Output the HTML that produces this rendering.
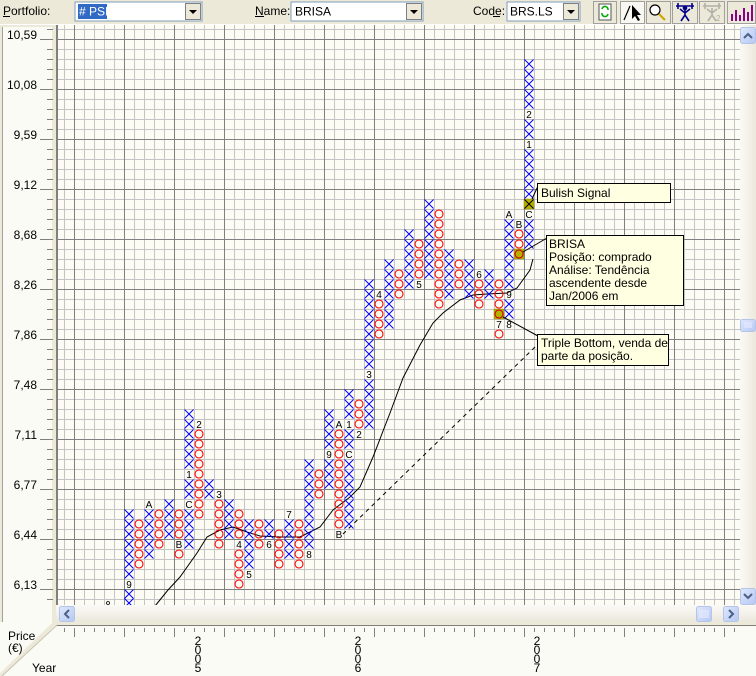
<!DOCTYPE html>
<html><head><meta charset="utf-8"><style>
html,body{margin:0;padding:0;background:#ece9d8;}
svg{display:block;font-family:"Liberation Sans",sans-serif;}
</style></head><body>
<svg width="756" height="676" viewBox="0 0 756 676" xmlns="http://www.w3.org/2000/svg">
<defs>
<path id="x" d="M-4.5,-4.5L4.5,4.5M4.5,-4.5L-4.5,4.5" stroke="#0000ff" stroke-width="1" fill="none"/>
<circle id="o" r="4" stroke="#ff0000" stroke-width="1.1" fill="none"/>
<pattern id="g" x="74" y="39" width="50" height="50" patternUnits="userSpaceOnUse">
<rect width="50" height="50" fill="#fcfcf5"/>
<rect x="10" width="1" height="50" fill="#c4c4c4"/><rect x="20" width="1" height="50" fill="#c4c4c4"/><rect x="30" width="1" height="50" fill="#c4c4c4"/><rect x="40" width="1" height="50" fill="#c4c4c4"/>
<rect y="10" width="50" height="1" fill="#c4c4c4"/><rect y="20" width="50" height="1" fill="#c4c4c4"/><rect y="30" width="50" height="1" fill="#c4c4c4"/><rect y="40" width="50" height="1" fill="#c4c4c4"/>
<rect x="0" width="1" height="50" fill="#808080"/><rect y="0" width="50" height="1" fill="#808080"/>
</pattern>
<pattern id="lt" x="0" y="9" width="10" height="10" patternUnits="userSpaceOnUse"><rect x="0" y="0" width="10" height="1" fill="#808080"/></pattern>
<pattern id="bt" x="4" y="0" width="10" height="10" patternUnits="userSpaceOnUse"><rect x="0" y="0" width="1" height="10" fill="#808080"/></pattern>
<linearGradient id="sb" x1="0" y1="0" x2="0" y2="1"><stop offset="0" stop-color="#fbfaf6"/><stop offset="1" stop-color="#ebe8dc"/></linearGradient>
<linearGradient id="sbv" x1="0" y1="0" x2="1" y2="0"><stop offset="0" stop-color="#fbfaf6"/><stop offset="1" stop-color="#ebe8dc"/></linearGradient>
<linearGradient id="bb" x1="0" y1="0" x2="1" y2="1"><stop offset="0" stop-color="#dfe8fd"/><stop offset="1" stop-color="#b5c8f3"/></linearGradient>
</defs>

<rect x="0" y="0" width="756" height="25" fill="#ece9d8"/>
<g font-size="12" fill="#000">
<text x="3" y="15">Portfolio:</text><rect x="3" y="16" width="7" height="1"/>
<rect x="75" y="2" width="127" height="19" fill="#fff" stroke="#7f9db9"/>
<rect x="78" y="4" width="29" height="15" fill="#316ac5"/>
<text x="79" y="15.5" fill="#fff"># PSI</text>
<text x="255" y="15">Name:</text><rect x="255" y="16" width="9" height="1"/>
<rect x="291" y="2" width="132" height="19" fill="#fff" stroke="#7f9db9"/>
<text x="295" y="15.5">BRISA</text>
<text x="473" y="15">Code:</text><rect x="493" y="16" width="7" height="1"/>
<rect x="507" y="2" width="73" height="19" fill="#fff" stroke="#7f9db9"/>
<text x="510" y="15.5">BRS.LS</text>
</g>
<g fill="#ece9d8" stroke="#808080">
<rect x="185.5" y="3.5" width="15" height="16"/><rect x="406.5" y="3.5" width="15" height="16"/><rect x="563.5" y="3.5" width="15" height="16"/>
</g>
<path d="M189,10h8l-4,4z M410,10h8l-4,4z M567,10h8l-4,4z" fill="#000"/>
<g fill="#ece9d8" stroke="#a0a0a0">
<rect x="593.5" y="1.5" width="23" height="22"/><rect x="620.5" y="1.5" width="24" height="22" fill="#f8f7f2"/><rect x="646.5" y="1.5" width="24" height="22"/><rect x="672.5" y="1.5" width="25" height="22"/><rect x="699.5" y="1.5" width="25" height="22"/><rect x="727.5" y="1.5" width="28" height="22"/>
</g>
<rect x="599" y="4" width="12" height="16" fill="#fff" stroke="#555"/>
<path d="M602,9a3,3 0 0 1 6,1M608,14a3,3 0 0 1 -6,-1" stroke="#0a0" stroke-width="1.6" fill="none"/>
<path d="M624,20L630,6" stroke="#000" stroke-width="1.2"/>
<path d="M632,5L632,19L635,16L638,21L640,20L637,15L641,15Z" fill="#000"/>
<circle cx="655" cy="10" r="5" fill="#fff" stroke="#000" stroke-width="1.2"/>
<path d="M659,14L665,20" stroke="#c9a800" stroke-width="2.2"/>
<g stroke="#00008b" stroke-width="1.6" fill="none"><path d="M676,6h18M678,3v6M692,3v6M685,8v7M680,9l5,4l5,-4M681,21l4,-6l4,6"/><circle cx="685" cy="8" r="1.5" fill="#00008b"/></g>
<g stroke="#b0b0a8" stroke-width="1.6" fill="none"><path d="M703,6h18M705,3v6M719,3v6M712,8v7M707,9l5,4l5,-4M708,21l4,-6l4,6"/></g>
<text x="716" y="21" font-size="8" fill="#b0b0a8">2</text>
<g fill="#8b008b"><rect x="731" y="14" width="2" height="7"/><rect x="735" y="10" width="2" height="11"/><rect x="739" y="15" width="2" height="6"/><rect x="743" y="8" width="2" height="13"/><rect x="747" y="12" width="2" height="9"/><rect x="751" y="5" width="2" height="16"/></g>
<rect x="0" y="24" width="756" height="1" fill="#fff"/>

<rect x="0" y="25" width="56" height="600" fill="#ece9d8"/>
<rect x="2" y="27" width="50" height="597" fill="#fbfbf6"/>
<rect x="2" y="27" width="1" height="597" fill="#a0a0a0"/>
<rect x="47" y="29" width="6" height="576" fill="url(#lt)"/>
<g font-size="12" fill="#000" text-anchor="end">
<text x="37" y="39">10,59</text><text x="37" y="89">10,08</text><text x="37" y="139">9,59</text><text x="37" y="189">9,12</text><text x="37" y="239">8,68</text><text x="37" y="289">8,26</text><text x="37" y="339">7,86</text><text x="37" y="389">7,48</text><text x="37" y="439">7,11</text><text x="37" y="489">6,77</text><text x="37" y="539">6,44</text><text x="37" y="589">6,13</text>
</g>
<g fill="#808080"><rect x="40" y="39" width="13" height="1"/><rect x="40" y="89" width="13" height="1"/><rect x="40" y="139" width="13" height="1"/><rect x="40" y="189" width="13" height="1"/><rect x="40" y="239" width="13" height="1"/><rect x="40" y="289" width="13" height="1"/><rect x="40" y="339" width="13" height="1"/><rect x="40" y="389" width="13" height="1"/><rect x="40" y="439" width="13" height="1"/><rect x="40" y="489" width="13" height="1"/><rect x="40" y="539" width="13" height="1"/><rect x="40" y="589" width="13" height="1"/></g>

<rect x="56" y="25" width="2" height="600" fill="#808080"/>
<rect x="58" y="25" width="682" height="580" fill="url(#g)"/>

<path d="M155,606 L168,590 L180,577 L197,553 L207,537 L220,530 L233,527 L247,532 L260,536 L280,537 L300,537 L320,527 L333,510 L350,497 L360,487 L373,457 L390,413 L403,378 L420,345 L433,323 L443,313 L460,300 L473,295 L487,294 L507,293 L517,288 L530,270 L533,259" stroke="#000" stroke-width="1" fill="none"/>
<path d="M343,534 L535,347" stroke="#000" stroke-width="1" stroke-dasharray="4,4" fill="none"/>
<circle cx="108" cy="603" r="1.5" fill="none" stroke="#000" stroke-width="0.8"/>

<g fill="#b8b000" stroke="#8a8400" stroke-width="0.5"><rect x="524" y="199" width="10" height="10"/><rect x="514" y="249" width="10" height="10"/><rect x="494" y="309" width="10" height="10"/></g>
<path d="M524.5,199.5L533.5,208.5M533.5,199.5L524.5,208.5" stroke="#000" stroke-width="1"/>
<circle cx="519" cy="254" r="4" stroke="#c00" stroke-width="1.1" fill="none"/>
<circle cx="499" cy="314" r="4" stroke="#c00" stroke-width="1.1" fill="none"/>

<g transform="translate(129 0)"><use href="#x" y="514"/><use href="#x" y="524"/><use href="#x" y="534"/><use href="#x" y="544"/><use href="#x" y="554"/><use href="#x" y="564"/><use href="#x" y="574"/><use href="#x" y="594"/><use href="#x" y="603"/></g>
<g transform="translate(139 0)"><use href="#o" y="524"/><use href="#o" y="534"/><use href="#o" y="544"/><use href="#o" y="554"/><use href="#o" y="564"/></g>
<g transform="translate(149 0)"><use href="#x" y="514"/><use href="#x" y="524"/><use href="#x" y="534"/><use href="#x" y="544"/><use href="#x" y="554"/></g>
<g transform="translate(159 0)"><use href="#o" y="514"/><use href="#o" y="524"/><use href="#o" y="534"/><use href="#o" y="544"/></g>
<g transform="translate(169 0)"><use href="#x" y="504"/><use href="#x" y="514"/><use href="#x" y="524"/><use href="#x" y="534"/></g>
<g transform="translate(179 0)"><use href="#o" y="514"/><use href="#o" y="524"/><use href="#o" y="534"/><use href="#o" y="554"/></g>
<g transform="translate(189 0)"><use href="#x" y="414"/><use href="#x" y="424"/><use href="#x" y="434"/><use href="#x" y="444"/><use href="#x" y="454"/><use href="#x" y="464"/><use href="#x" y="484"/><use href="#x" y="494"/><use href="#x" y="514"/><use href="#x" y="524"/><use href="#x" y="534"/><use href="#x" y="544"/></g>
<g transform="translate(199 0)"><use href="#o" y="434"/><use href="#o" y="444"/><use href="#o" y="454"/><use href="#o" y="464"/><use href="#o" y="474"/><use href="#o" y="484"/><use href="#o" y="494"/><use href="#o" y="504"/><use href="#o" y="514"/></g>
<g transform="translate(209 0)"><use href="#x" y="484"/><use href="#x" y="494"/></g>
<g transform="translate(219 0)"><use href="#o" y="504"/><use href="#o" y="514"/><use href="#o" y="524"/><use href="#o" y="534"/><use href="#o" y="544"/></g>
<g transform="translate(229 0)"><use href="#x" y="504"/><use href="#x" y="514"/><use href="#x" y="524"/><use href="#x" y="534"/></g>
<g transform="translate(239 0)"><use href="#o" y="514"/><use href="#o" y="524"/><use href="#o" y="534"/><use href="#o" y="554"/><use href="#o" y="564"/><use href="#o" y="574"/><use href="#o" y="584"/></g>
<g transform="translate(249 0)"><use href="#x" y="524"/><use href="#x" y="534"/><use href="#x" y="544"/><use href="#x" y="554"/><use href="#x" y="564"/></g>
<g transform="translate(259 0)"><use href="#o" y="524"/><use href="#o" y="534"/><use href="#o" y="544"/></g>
<g transform="translate(269 0)"><use href="#x" y="524"/><use href="#x" y="534"/></g>
<g transform="translate(279 0)"><use href="#o" y="534"/><use href="#o" y="544"/><use href="#o" y="554"/><use href="#o" y="564"/></g>
<g transform="translate(289 0)"><use href="#x" y="524"/><use href="#x" y="534"/><use href="#x" y="544"/><use href="#x" y="554"/></g>
<g transform="translate(299 0)"><use href="#o" y="524"/><use href="#o" y="534"/><use href="#o" y="544"/><use href="#o" y="554"/><use href="#o" y="564"/></g>
<g transform="translate(309 0)"><use href="#x" y="464"/><use href="#x" y="474"/><use href="#x" y="484"/><use href="#x" y="494"/><use href="#x" y="504"/><use href="#x" y="514"/><use href="#x" y="524"/><use href="#x" y="534"/><use href="#x" y="544"/></g>
<g transform="translate(319 0)"><use href="#o" y="474"/><use href="#o" y="484"/><use href="#o" y="494"/></g>
<g transform="translate(329 0)"><use href="#x" y="414"/><use href="#x" y="424"/><use href="#x" y="434"/><use href="#x" y="444"/><use href="#x" y="464"/><use href="#x" y="474"/><use href="#x" y="484"/></g>
<g transform="translate(339 0)"><use href="#o" y="434"/><use href="#o" y="444"/><use href="#o" y="454"/><use href="#o" y="464"/><use href="#o" y="474"/><use href="#o" y="484"/><use href="#o" y="494"/><use href="#o" y="504"/><use href="#o" y="514"/><use href="#o" y="524"/></g>
<g transform="translate(349 0)"><use href="#x" y="394"/><use href="#x" y="404"/><use href="#x" y="414"/><use href="#x" y="434"/><use href="#x" y="444"/><use href="#x" y="464"/><use href="#x" y="474"/><use href="#x" y="484"/><use href="#x" y="494"/><use href="#x" y="504"/><use href="#x" y="514"/><use href="#x" y="524"/></g>
<g transform="translate(359 0)"><use href="#o" y="404"/><use href="#o" y="414"/><use href="#o" y="424"/></g>
<g transform="translate(369 0)"><use href="#x" y="284"/><use href="#x" y="294"/><use href="#x" y="304"/><use href="#x" y="314"/><use href="#x" y="324"/><use href="#x" y="334"/><use href="#x" y="344"/><use href="#x" y="354"/><use href="#x" y="364"/><use href="#x" y="384"/><use href="#x" y="394"/><use href="#x" y="404"/><use href="#x" y="414"/><use href="#x" y="424"/></g>
<g transform="translate(379 0)"><use href="#o" y="304"/><use href="#o" y="314"/><use href="#o" y="324"/><use href="#o" y="334"/></g>
<g transform="translate(389 0)"><use href="#x" y="264"/><use href="#x" y="274"/><use href="#x" y="284"/><use href="#x" y="294"/><use href="#x" y="304"/><use href="#x" y="314"/><use href="#x" y="324"/></g>
<g transform="translate(399 0)"><use href="#o" y="274"/><use href="#o" y="284"/><use href="#o" y="294"/></g>
<g transform="translate(409 0)"><use href="#x" y="234"/><use href="#x" y="244"/><use href="#x" y="254"/><use href="#x" y="264"/><use href="#x" y="274"/><use href="#x" y="284"/></g>
<g transform="translate(419 0)"><use href="#o" y="244"/><use href="#o" y="254"/><use href="#o" y="264"/><use href="#o" y="274"/></g>
<g transform="translate(429 0)"><use href="#x" y="204"/><use href="#x" y="214"/><use href="#x" y="224"/><use href="#x" y="234"/><use href="#x" y="244"/><use href="#x" y="254"/><use href="#x" y="264"/><use href="#x" y="274"/></g>
<g transform="translate(439 0)"><use href="#o" y="214"/><use href="#o" y="224"/><use href="#o" y="234"/><use href="#o" y="244"/><use href="#o" y="254"/><use href="#o" y="264"/><use href="#o" y="274"/><use href="#o" y="284"/><use href="#o" y="294"/><use href="#o" y="304"/></g>
<g transform="translate(449 0)"><use href="#x" y="254"/><use href="#x" y="264"/><use href="#x" y="274"/><use href="#x" y="284"/><use href="#x" y="294"/></g>
<g transform="translate(459 0)"><use href="#o" y="264"/><use href="#o" y="274"/><use href="#o" y="284"/></g>
<g transform="translate(469 0)"><use href="#x" y="264"/><use href="#x" y="274"/><use href="#x" y="284"/><use href="#x" y="294"/></g>
<g transform="translate(479 0)"><use href="#o" y="284"/><use href="#o" y="294"/><use href="#o" y="304"/></g>
<g transform="translate(489 0)"><use href="#x" y="274"/><use href="#x" y="284"/><use href="#x" y="294"/></g>
<g transform="translate(499 0)"><use href="#o" y="284"/><use href="#o" y="294"/><use href="#o" y="304"/><use href="#o" y="334"/></g>
<g transform="translate(509 0)"><use href="#x" y="224"/><use href="#x" y="234"/><use href="#x" y="244"/><use href="#x" y="254"/><use href="#x" y="264"/><use href="#x" y="274"/><use href="#x" y="284"/><use href="#x" y="304"/><use href="#x" y="314"/></g>
<g transform="translate(519 0)"><use href="#o" y="234"/><use href="#o" y="244"/></g>
<g transform="translate(529 0)"><use href="#x" y="64"/><use href="#x" y="74"/><use href="#x" y="84"/><use href="#x" y="94"/><use href="#x" y="104"/><use href="#x" y="124"/><use href="#x" y="134"/><use href="#x" y="154"/><use href="#x" y="164"/><use href="#x" y="174"/><use href="#x" y="184"/><use href="#x" y="194"/><use href="#x" y="224"/><use href="#x" y="234"/><use href="#x" y="244"/></g>

<g font-size="10" fill="#000" text-anchor="middle">
<text x="129" y="588">9</text><text x="149" y="508">A</text><text x="179" y="548">B</text><text x="189" y="478">1</text><text x="189" y="508">C</text><text x="199" y="428">2</text><text x="219" y="498">3</text><text x="239" y="548">4</text><text x="249" y="578">5</text><text x="269" y="548">6</text><text x="289" y="518">7</text><text x="309" y="558">8</text><text x="329" y="458">9</text><text x="339" y="428">A</text><text x="339" y="538">B</text><text x="349" y="428">1</text><text x="349" y="458">C</text><text x="359" y="438">2</text><text x="369" y="378">3</text><text x="379" y="298">4</text><text x="419" y="288">5</text><text x="479" y="278">6</text><text x="499" y="328">7</text><text x="509" y="218">A</text><text x="509" y="298">9</text><text x="509" y="328">8</text><text x="519" y="228">B</text><text x="529" y="118">2</text><text x="529" y="148">1</text><text x="529" y="218">C</text>
</g>

<g stroke="#000" stroke-width="1" fill="none"><path d="M538,186L532,199"/><path d="M547,238L523,252"/><path d="M538,336L503,317"/></g>
<rect x="537.5" y="183.5" width="133" height="19" fill="#ffffe1" stroke="#000"/>
<text x="541" y="197" font-size="12">Bulish Signal</text>
<rect x="546.5" y="235.5" width="137" height="70" fill="#ffffe1" stroke="#000"/>
<g font-size="12"><text x="549" y="248">BRISA</text><text x="549" y="261">Posição: comprado</text><text x="549" y="274">Análise: Tendência</text><text x="549" y="287">ascendente desde</text><text x="549" y="300">Jan/2006 em</text></g>
<rect x="537.5" y="334.5" width="131" height="31" fill="#ffffe1" stroke="#000"/>
<g font-size="12"><text x="541" y="347">Triple Bottom, venda de</text><text x="541" y="360">parte da posição.</text></g>

<rect x="740" y="25" width="16" height="580" fill="url(#sbv)"/>
<rect x="740.5" y="27.5" width="15" height="16" rx="2" fill="url(#bb)" stroke="#b5c5ea"/>
<path d="M744,38l4,-4l4,4" stroke="#4d6185" stroke-width="2" fill="none"/>
<rect x="740.5" y="588.5" width="15" height="16" rx="2" fill="url(#bb)" stroke="#b5c5ea"/>
<path d="M744,594l4,4l4,-4" stroke="#4d6185" stroke-width="2" fill="none"/>
<rect x="740.5" y="319.5" width="15" height="12" rx="2" fill="url(#bb)" stroke="#b5c5ea"/>
<path d="M744,323h8M744,325h8M744,327h8" stroke="#eef" stroke-width="1"/>

<rect x="56" y="605" width="700" height="17" fill="url(#sb)"/>
<rect x="59.5" y="606.5" width="15" height="15" rx="2" fill="url(#bb)" stroke="#b5c5ea"/>
<path d="M69,610l-4,4l4,4" stroke="#4d6185" stroke-width="2" fill="none"/>
<rect x="696.5" y="606.5" width="15" height="15" rx="2" fill="url(#bb)" stroke="#b5c5ea"/>
<path d="M700,610v8M702,610v8M704,610v8M706,610v8M708,610v8" stroke="#eef" stroke-width="1"/>
<rect x="723.5" y="606.5" width="15" height="15" rx="2" fill="url(#bb)" stroke="#b5c5ea"/>
<path d="M729,610l4,4l-4,4" stroke="#4d6185" stroke-width="2" fill="none"/>

<rect x="0" y="622" width="756" height="54" fill="#fbfbf6"/>
<rect x="56" y="622" width="700" height="3" fill="#ece9d8"/>
<rect x="56" y="625" width="700" height="1" fill="#808080"/>
<path d="M56,622L0,676" stroke="#ece9d8" stroke-width="4"/>
<path d="M57,625L2,676" stroke="#c8c4b0" stroke-width="1"/>
<rect x="58" y="628" width="682" height="4" fill="url(#bt)"/>
<g fill="#808080"><rect x="74" y="628" width="1" height="9"/><rect x="124" y="628" width="1" height="9"/><rect x="174" y="628" width="1" height="9"/><rect x="224" y="628" width="1" height="9"/><rect x="274" y="628" width="1" height="9"/><rect x="324" y="628" width="1" height="9"/><rect x="374" y="628" width="1" height="9"/><rect x="424" y="628" width="1" height="9"/><rect x="474" y="628" width="1" height="9"/><rect x="524" y="628" width="1" height="9"/><rect x="574" y="628" width="1" height="9"/><rect x="624" y="628" width="1" height="9"/><rect x="674" y="628" width="1" height="9"/><rect x="724" y="628" width="1" height="9"/></g>
<g font-size="12" fill="#000">
<text x="8" y="640">Price</text><text x="8" y="652">(€)</text><text x="32" y="672">Year</text>
</g>
<g font-size="12" fill="#000" text-anchor="middle">
<text x="198" y="645">2</text><text x="198" y="654">0</text><text x="198" y="663">0</text><text x="198" y="672">5</text>
<text x="358" y="645">2</text><text x="358" y="654">0</text><text x="358" y="663">0</text><text x="358" y="672">6</text>
<text x="537" y="645">2</text><text x="537" y="654">0</text><text x="537" y="663">0</text><text x="537" y="672">7</text>
</g>
</svg>
</body></html>
